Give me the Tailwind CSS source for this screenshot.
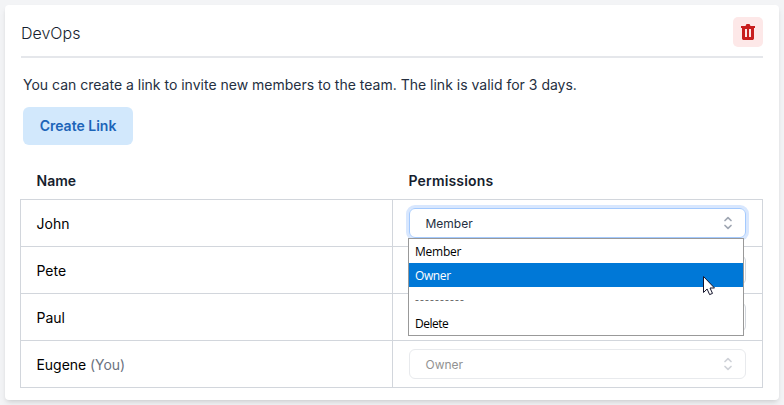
<!DOCTYPE html>
<html lang="en">
<head>
<meta charset="utf-8">
<title>DevOps</title>
<script src="https://cdn.jsdelivr.net/npm/@tailwindcss/browser@4"></script>
</head>
<body class="bg-[#f3f4f6] font-['Inter',sans-serif] text-[#161e2e] w-[784px] h-[405px] overflow-hidden p-[5px]">
<main class="w-[774px] h-[395px] bg-white rounded-[4px] shadow-md pl-[15px] pr-[16px] pt-3">
  <header class="ml-px h-[41px] border-b-2 border-[#e5e7eb] flex justify-between items-start">
    <h1 class="text-base font-light leading-6 pt-1"><span>DevOps</span></h1>
    <button class="size-[30px] rounded-[5px] bg-[#fde8e8] flex items-center justify-center" aria-label="Delete team">
      <svg class="w-[14px] h-4" viewBox="0 0 14 16" fill="#c81e1e"><path fill-rule="evenodd" d="M0 2H4.500L5.500 0h3L9.500 2H14V4h-1v10.200c0 1-.8 1.800-1.800 1.800H2.800C1.800 16 1 15.200 1 14.200V4H0ZM4 5v8h2V5ZM8 5v8h2V5Z"/></svg>
    </button>
  </header>
  <section class="pl-[3px] pt-[17px]">
    <p class="text-sm leading-5 text-[#252f3f]"><span>You can create a link to invite new members to the team. The link is valid for 3 days.</span></p>
    <button class="mt-3 w-[110px] h-[38px] rounded-md bg-[#d2e8fc] text-[#1c64b8] text-sm font-semibold"><span>Create Link</span></button>
  </section>
  <div class="mt-[18px] text-sm leading-5">
    <div class="h-9 grid grid-cols-[372px_371px] items-center font-semibold">
      <div class="pl-[16.500px]"><span>Name</span></div>
      <div class="pl-[16.500px] tracking-[0.012em]"><span>Permissions</span></div>
    </div>
    <div class="border-x border-b border-[#d2d6dc] text-black">
      <div class="h-[47px] border-t border-[#d2d6dc] grid grid-cols-[371px_1fr]">
        <div class="pl-[15.500px] pt-[14px]"><span>John</span></div>
        <div class="relative border-l border-[#d2d6dc] pl-4 pt-2">
          <div class="w-[337px] h-[30px] rounded-md border border-[#a4cafe] ring-3 ring-[#d8e7fe] flex items-center justify-between pl-[15.500px] pr-3 text-xs text-[#252f3f]">
            <span class="pt-px">Member</span>
            <svg class="w-[10px] h-[14px]" viewBox="0 0 10 14" fill="none" stroke="#9fa6b2" stroke-width="1.700" stroke-linecap="round" stroke-linejoin="round"><path d="M2 4.500 5 1.700l3 2.800M2 9.500l3 2.800 3-2.800"/></svg>
          </div>
          <div class="absolute z-10 left-[15px] top-[38px] w-[336px] h-[98px] border border-[#999] bg-white text-xs tracking-[-0.250px] font-['Open_Sans',sans-serif] leading-6 text-black">
            <div class="h-6 pl-[6px] pt-px"><span>Member</span></div>
            <div class="h-6 pl-[6px] pt-px bg-[#0078d7] text-white tracking-[-0.400px]"><span>Owner</span></div>
            <div class="h-6 pl-[6px] pt-px text-[#6d6d6d] tracking-[1.150px]"><span>----------</span></div>
            <div class="h-6 pl-[6px] pt-px tracking-[-0.500px]"><span>Delete</span></div>
            <svg class="absolute left-[293px] top-[36px] w-[14px] h-[21px]" viewBox="0 0 14 21"><path d="M1.500 1.500v16l3.600-3.500 2.500 5.600 2.900-1.200-2.500-5.400h4.500Z" fill="#fff" stroke="#14142b" stroke-width="1"/></svg>
          </div>
        </div>
      </div>
      <div class="h-[47px] border-t border-[#d2d6dc] grid grid-cols-[371px_1fr]">
        <div class="pl-[15.500px] pt-[14px]"><span>Pete</span></div>
        <div class="border-l border-[#d2d6dc] pl-4 pt-2"><div class="w-[337px] h-[30px] rounded-md border border-[#d2d6dc]"></div></div>
      </div>
      <div class="h-[47px] border-t border-[#d2d6dc] grid grid-cols-[371px_1fr]">
        <div class="pl-[15.500px] pt-[14px]"><span>Paul</span></div>
        <div class="border-l border-[#d2d6dc] pl-4 pt-2"><div class="w-[337px] h-[30px] rounded-md border border-[#d2d6dc]"></div></div>
      </div>
      <div class="h-[47px] border-t border-[#d2d6dc] grid grid-cols-[371px_1fr]">
        <div class="pl-[15.500px] pt-[14px] tracking-[-0.050px]"><span>Eugene <span class="text-[#6b7280]">(You)</span></span></div>
        <div class="border-l border-[#d2d6dc] pl-4 pt-2">
          <div class="w-[337px] h-[30px] rounded-md border border-[#e8eaed] flex items-center justify-between pl-[15.500px] pr-3 text-xs text-[#929292]">
            <span class="pt-px">Owner</span>
            <svg class="w-[10px] h-[14px]" viewBox="0 0 10 14" fill="none" stroke="#cfd2d8" stroke-width="1.700" stroke-linecap="round" stroke-linejoin="round"><path d="M2 4.500 5 1.700l3 2.800M2 9.500l3 2.800 3-2.800"/></svg>
          </div>
        </div>
      </div>
    </div>
  </div>
</main>
</body>
</html>
